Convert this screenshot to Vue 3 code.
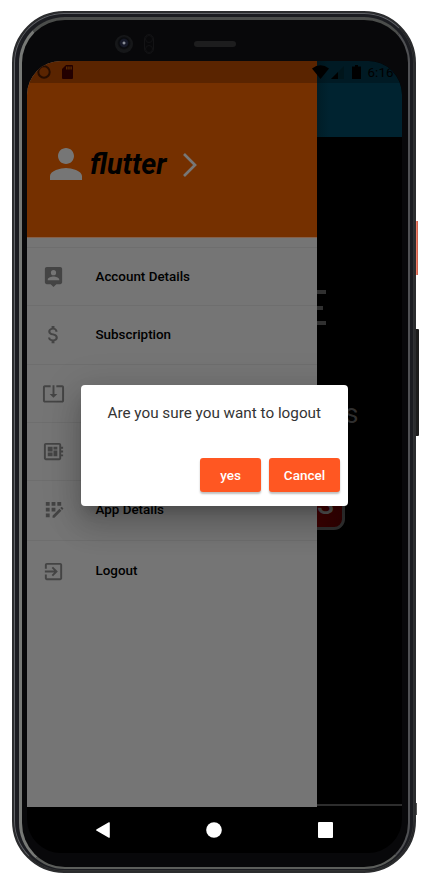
<script setup>
const items = [
  { label: 'Account Details', icon: 'M19 2H5c-1.110 0-2 .9-2 2v14c0 1.100.89 2 2 2h4l3 3 3-3h4c1.100 0 2-.9 2-2V4c0-1.100-.9-2-2-2zm-7 3.300a2.700 2.700 0 110 5.400 2.700 2.700 0 010-5.400zM18 16H6v-.9c0-2 4-3.100 6-3.100s6 1.100 6 3.100v.9z' },
  { label: 'Subscription', icon: 'M11.8 10.900c-2.270-.59-3-1.200-3-2.150 0-1.090 1.010-1.850 2.700-1.850 1.780 0 2.440.85 2.500 2.100h2.210c-.07-1.720-1.120-3.300-3.210-3.810V3h-3v2.160c-1.940.42-3.500 1.680-3.500 3.610 0 2.310 1.910 3.460 4.700 4.130 2.500.6 3 1.480 3 2.410 0 .69-.49 1.790-2.700 1.790-2.060 0-2.870-.92-2.980-2.100h-2.200c.12 2.190 1.760 3.420 3.680 3.830V21h3v-2.150c1.950-.37 3.500-1.500 3.500-3.550 0-2.840-2.430-3.810-4.700-4.400z' },
  { label: 'Downloads', icon: 'M12 16.500l4-4h-3v-9h-2v9H8l4 4zm9-13h-6v1.990h6v14.030H3V5.490h6V3.500H3c-1.100 0-2 .9-2 2v14c0 1.100.9 2 2 2h18c1.100 0 2-.9 2-2v-14c0-1.100-.9-2-2-2z' },
  { label: 'Device', icon: 'M22 9V7h-2V5c0-1.100-.9-2-2-2H4c-1.100 0-2 .9-2 2v14c0 1.100.9 2 2 2h14c1.100 0 2-.9 2-2v-2h2v-2h-2v-2h2v-2h-2V9h2zm-4 10H4V5h14v14zM6 13h5v4H6zm6-6h4v3h-4zM6 7h5v5H6zm6 4h4v6h-4z' },
  { label: 'App Details', icon: 'M4 3h4v4H4zm6 0h4v4h-4zm6 0h4v4h-4zM4 9h4v4H4zm6 0h4v4h-4zM4 15h4v4H4zM19 9.500l2 2 1-1c.3-.3.3-.7 0-1l-1-1c-.3-.3-.7-.3-1 0zm-.8.8-7.200 7.200v2h2l7.200-7.200z' },
  { label: 'Logout', icon: 'M10.090 15.590L11.500 17l5-5-5-5-1.410 1.410L12.670 11H3v2h9.670l-2.580 2.590zM19 3H5c-1.110 0-2 .9-2 2v4h2V5h14v14H5v-4H3v4c0 1.100.89 2 2 2h14c1.100 0 2-.9 2-2V5c0-1.100-.9-2-2-2z' }
]
</script>

<template>
  <main class="stage">
    <i class="side-key power"></i>
    <i class="side-key volume"></i>
    <i class="side-key low"></i>
    <section class="phone">
      <div class="rim"><div class="glass"></div></div>
      <header class="bezel">
        <span class="camera"></span>
        <span class="sensor"><i></i><i></i></span>
        <span class="speaker"></span>
      </header>
      <div class="screen">
        <div class="app">
          <aside class="drawer">
            <div class="profile">
              <svg class="person" viewBox="4 4 16 16"><path d="M12 12c2.210 0 4-1.790 4-4s-1.790-4-4-4-4 1.790-4 4 1.790 4 4 4zm0 2c-2.670 0-8 1.340-8 4v2h16v-2c0-2.660-5.330-4-8-4z" /></svg>
              <strong>flutter</strong>
              <svg class="chevron" viewBox="0 0 14 24"><path d="M1 1l11 11L1 23" /></svg>
            </div>
            <nav>
              <div v-for="item in items" :key="item.label" class="item">
                <svg viewBox="0 0 24 24"><path :d="item.icon" fill-rule="evenodd" /></svg>
                <span>{{ item.label }}</span>
              </div>
            </nav>
          </aside>
          <div class="page">
            <div class="appbar"></div>
            <div class="letter"><i></i><i></i><i></i></div>
            <span class="tail">s</span>
            <div class="badge"><span>S</span></div>
            <div class="page-line"></div>
          </div>
          <div class="status">
            <svg class="ring" viewBox="0 0 14 14"><circle cx="7" cy="7" r="5.700" /></svg>
            <svg class="card" viewBox="0 0 11 14"><path d="M4 0h6q1 0 1 1v12q0 1-1 1H1q-1 0-1-1V4z" /><path class="pins" d="M4 1.500h1.500v3H4zm2.200 0h1.500v3H6.200zm2.200 0h1.400v3H8.400z" /></svg>
            <svg class="wifi" viewBox="0 0 17 14"><path d="M0 3.500Q8.500-3 17 3.500L8.500 14z" /></svg>
            <svg class="signal" viewBox="0 0 13 13"><path class="dim" d="M13 0v13H0z" /><path d="M7 6v7H0z" /></svg>
            <svg class="battery" viewBox="0 0 9 14"><path d="M3 0h3v1.500h3V14H0V1.500h3z" /></svg>
            <span>6:16</span>
          </div>
          <div class="dialog">
            <p>Are you sure you want to logout</p>
            <div class="actions"><button>yes</button><button class="cancel">Cancel</button></div>
          </div>
        </div>
        <footer>
          <svg viewBox="0 0 14 16"><path d="M.7 7.200 12.800.3q1-.5 1 .7v14q0 1.200-1 .7L.7 8.800q-1.300-.8 0-1.600z" /></svg>
          <svg class="home" viewBox="0 0 16 16"><circle cx="8" cy="8" r="7.800" /></svg>
          <svg class="recent" viewBox="0 0 15 16"><rect width="15" height="16" rx="1" /></svg>
        </footer>
      </div>
    </section>
  </main>
</template>

<style>
body { margin: 0; background: #fff; }
</style>

<style scoped>
* { box-sizing: border-box; }
.stage { position: relative; width: 423px; height: 878px; padding: 11px 7px 5px 12px; overflow: hidden; background: #fff; font-family: Roboto, sans-serif; }
.phone { position: relative; width: 404px; height: 862px; padding: 0 12px 0 13px; border: 2px solid #2b2c2e; border-radius: 52px; background: #08080a; }
.rim { position: absolute; inset: 0; border: 1px solid #606267; border-right-color: #303133; border-bottom-color: #303131; border-radius: 50px; background: #1b1c21; }
.glass { position: absolute; inset: 3px 3px 1px 4px; border: 3px solid #777976; border-top-color: #4b4d4b; border-right: 2px solid #505154; border-bottom: 2px solid #5c5e5b; border-radius: 46px; background: #08080a; }
.side-key { position: absolute; left: 415px; width: 3px; }
.power { top: 221px; height: 54px; background: #f17e67; border-right: 1px solid #d06450; }
.volume { top: 329px; height: 107px; width: 4px; background: #1d1d1d; border-radius: 1px; }
.low { top: 803px; height: 12px; width: 2px; background: #555; }
.bezel { position: relative; height: 48px; display: flex; padding: 21px 0 0 88px; }
.camera { width: 18px; height: 18px; margin-top: 1px; border-radius: 50%; background: radial-gradient(circle at 9px 8px, #8a8e98 0 .7px, #171a29 2px 3.500px, #08090c 5px, #161719 7px 9px); }
.sensor { display: flex; flex-direction: column; justify-content: space-between; width: 10px; height: 20px; margin-left: 11px; border: 1px solid #131315; border-radius: 5px; }
.sensor i { width: 8px; height: 8px; border: 1px solid #121214; border-radius: 50%; }
.speaker { width: 42px; height: 6px; margin: 7px 0 0 40px; background: #1d1d1e; border-radius: 3px; }
.screen { position: relative; width: 375px; height: 792px; border-radius: 34px; overflow: hidden; background: #000; }
.app { position: relative; height: 746px; display: flex; }
.drawer { width: 290px; background: #757575; }
.profile { height: 177px; display: flex; align-items: flex-start; padding-left: 23px; background: #753000; border-bottom: 1px solid #85604a; }
.person { width: 32px; height: 32px; margin-top: 87px; fill: #767676; }
.profile strong { width: 86px; margin: 86px 0 0 8px; color: #000; font-size: 28.600px; line-height: 35px; font-weight: 700; font-style: italic; }
.chevron { width: 14px; height: 24px; margin: 92px 0 0 7px; fill: none; stroke: #777; stroke-width: 2.700; }
nav { padding-top: 9px; }
.item { height: 58.300px; display: flex; align-items: center; border-top: 1px solid #6e6e6e; padding: 0 0 0 15px; }
.item:nth-child(5) { height: 60px; padding-bottom: 1px; }
.item:last-child { height: 62px; padding-bottom: 1px; }
.item svg { width: 23px; height: 23px; fill: #444; }
.item span { margin-left: 30.500px; color: #000; font-size: 13.400px; font-weight: 500; line-height: 20px; }
.page { position: relative; flex: 1; overflow: hidden; background: #000; }
.appbar { height: 76px; background: linear-gradient(90deg, #001d27, #002330 12px); }
.letter { display: flex; flex-direction: column; justify-content: space-between; height: 35px; margin-top: 153px; }
.letter i { width: 9px; height: 4px; background: #303030; }
.letter i:nth-child(2) { width: 6px; }
.tail { position: absolute; left: 27.500px; top: 335px; color: #363636; font-size: 27px; line-height: 36px; }
.badge { position: absolute; left: -15px; top: 424px; width: 43px; height: 45px; border: 3px solid #303030; border-radius: 11px; background: linear-gradient(135deg, #570000, #2d0000); color: #555; }
.badge span { display: block; margin-left: 12px; font-size: 28px; line-height: 33px; font-weight: 500; }
.page-line { position: absolute; left: 0; right: 0; bottom: 1px; height: 2px; background: #2d2d2d; }
.status { position: absolute; top: 0; left: 0; width: 100%; height: 22px; display: flex; align-items: center; background: rgba(0, 0, 0, .23); color: #000; }
.ring { width: 14px; margin-left: 10px; fill: none; stroke: #260d00; stroke-width: 2; }
.card { width: 11px; margin-left: 10.500px; fill: #230000; }
.card .pins { fill: #592900; }
.wifi { width: 17px; margin-left: 239px; }
.signal { width: 13px; margin-left: 2px; }
.signal .dim { fill: #00151b; }
.battery { width: 9px; margin-left: 8px; }
.status span { margin-left: 7px; font-size: 13.300px; letter-spacing: .1px; }
.dialog { position: absolute; left: 53.500px; top: 323.600px; width: 267.500px; height: 121.400px; padding: 16px 8px 0; border-radius: 4px; background: #fff; box-shadow: 0 9px 12px -5px rgba(0,0,0,.20), 0 20px 30px 2px rgba(0,0,0,.14), 0 7px 37px 6px rgba(0,0,0,.12); }
.dialog p { margin: 0; text-align: center; color: #343434; font-size: 15.270px; line-height: 24px; white-space: nowrap; }
.actions { display: flex; justify-content: flex-end; gap: 8px; margin-top: 33px; }
button { width: 61px; height: 34.500px; padding: 0; border: 0; border-radius: 3px; background: #ff5722; color: #fff; box-shadow: 0 2px 2px rgba(0,0,0,.25); font: 500 13.500px Roboto, sans-serif; }
.cancel { width: 71px; }
footer { height: 46px; display: flex; align-items: center; padding-left: 69px; fill: #fff; }
footer svg { width: 14px; height: 16px; }
footer .home { width: 16px; margin-left: 96px; }
footer .recent { width: 15px; margin-left: 96px; }
</style>
